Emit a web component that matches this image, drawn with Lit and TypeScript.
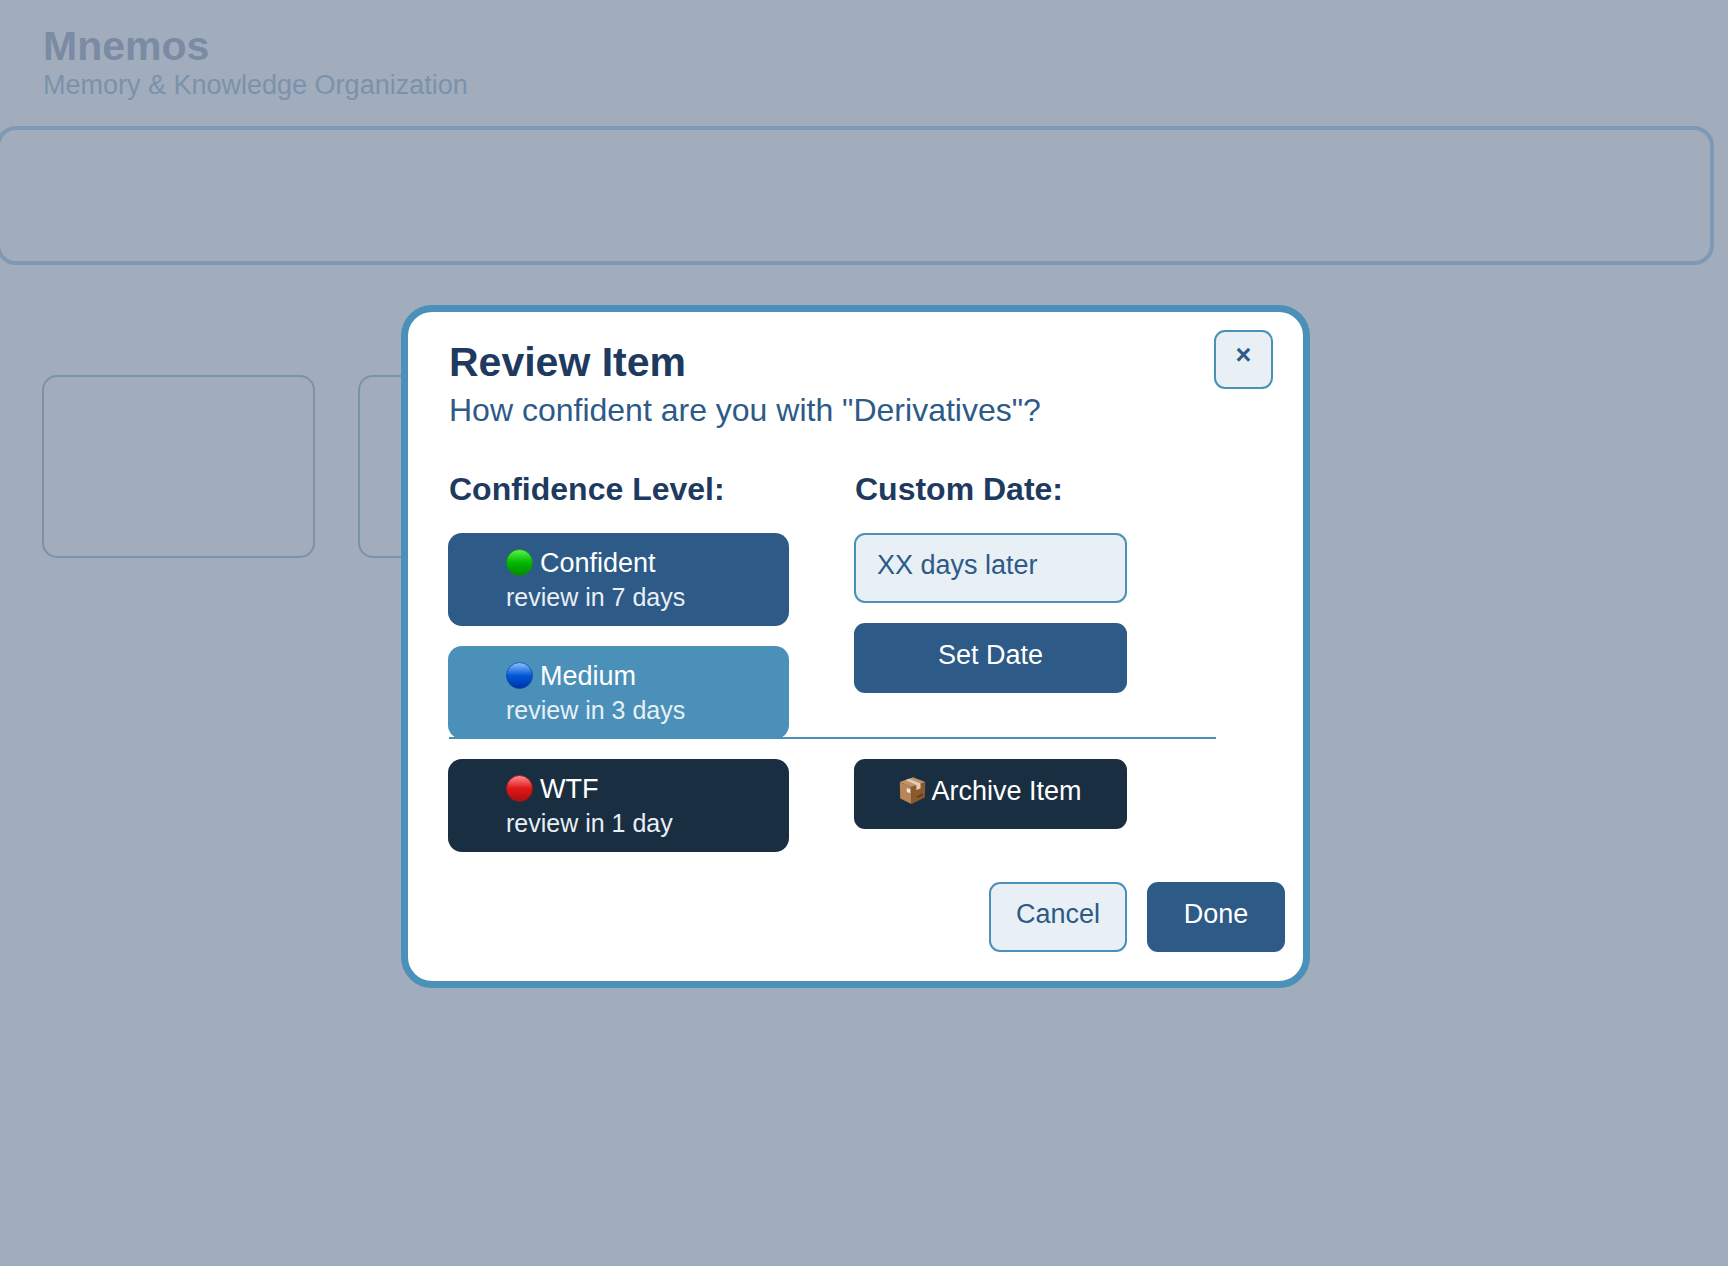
import { LitElement, html, css, svg } from "lit";
import { customElement, state } from "lit/decorators.js";

interface Level {
  id: string;
  label: string;
  note: string;
  tone: string;
  stops: [string, string, string];
  rim: string;
}

const LEVELS: Level[] = [
  { id: "high", label: "Confident", note: "review in 7 days", tone: "primary", stops: ["#5cf550", "#02b800", "#018a00"], rim: "#158a1c" },
  { id: "medium", label: "Medium", note: "review in 3 days", tone: "accent", stops: ["#8fc4ff", "#0059d6", "#0030a8"], rim: "#0b4a9e" },
  { id: "low", label: "WTF", note: "review in 1 day", tone: "dark", stops: ["#ff8f8f", "#e01717", "#a81010"], rim: "#8c1a1c" },
];

@customElement("app-root")
export class AppRoot extends LitElement {
  @state() private days = "";

  static styles = css`
    :host {
      --navy: #1e3a5f;
      --primary: #2d5a87;
      --accent: #4a90b9;
      --dark: #1a2e42;
      --tint: #e8eff5;
      --muted: #a1adbd;
      display: block;
      font-family: "Liberation Sans", Arial, sans-serif;
    }
    * { box-sizing: border-box; margin: 0; }
    h1, h2, h3 { font-weight: 700; }
    .page {
      position: relative;
      min-height: 100vh;
      overflow: hidden;
      background: var(--muted);
    }
    .header { padding: 23px 43px 0; }
    .brand { font-size: 41px; line-height: 46px; color: #7a8ba3; }
    .tagline { font-size: 27px; line-height: 32px; color: #7b92ab; }
    .banner {
      height: 139px;
      margin: 25px 14px 0 -4px;
      border: 4px solid #8099b2;
      border-radius: 20px;
    }
    .cards { display: flex; gap: 43px; padding: 110px 42px 0; }
    .card {
      width: 273px;
      height: 183px;
      border: 2px solid #7b92ab;
      border-radius: 15px;
    }
    .halo {
      position: absolute;
      right: -365px;
      bottom: -50px;
      width: 394px;
      height: 394px;
      border-radius: 50%;
      background: #a0abbb;
    }
    .overlay {
      position: absolute;
      inset: 0;
      display: flex;
      align-items: center;
      justify-content: center;
      padding: 27px 17px 0 0;
    }
    .dialog {
      width: 909px;
      padding: 18px 18px 29px 40px;
      border: 7px solid var(--accent);
      border-radius: 31px;
      background: #fff;
    }
    .top { display: flex; justify-content: space-between; padding-right: 12px; }
    .titles { padding: 9px 0 0 1px; }
    .title { font-size: 41px; line-height: 46px; color: var(--navy); }
    .question { font-size: 32px; line-height: 36px; padding-top: 7px; color: var(--primary); }
    .columns {
      display: grid;
      grid-template-columns: 341px 273px;
      grid-template-rows: 42px 93px 93px 93px;
      column-gap: 65px;
      row-gap: 20px;
      padding-top: 43px;
      position: relative;
    }
    .heading { padding-left: 1px; font-size: 32px; line-height: 36px; color: var(--navy); }
    .heading.first { grid-area: 1 / 1; }
    .heading.second { grid-area: 1 / 2; }
    .levels {
      grid-area: 2 / 1 / 5 / 2;
      display: flex;
      flex-direction: column;
      gap: 20px;
    }
    .custom {
      grid-area: 2 / 2 / 4 / 3;
      display: flex;
      flex-direction: column;
      gap: 20px;
    }
    .archive { grid-area: 4 / 2; }
    .rule {
      position: absolute;
      left: 1px;
      right: 69px;
      bottom: 113px;
      height: 2px;
      border: 0;
      background: var(--accent);
    }
    button, input { font: inherit; font-size: 27px; }
    button { cursor: pointer; }
    .level {
      display: flex;
      flex-direction: column;
      height: 93px;
      padding: 13px 58px 0;
      border: 0;
      border-radius: 14px;
      color: #fff;
      text-align: left;
    }
    .name { display: flex; align-items: center; gap: 7px; line-height: 35px; }
    .note { font-size: 25px; line-height: 32px; color: var(--tint); }
    .dot { width: 27px; height: 27px; margin-bottom: 3px; }
    .primary { background: var(--primary); }
    .accent { background: var(--accent); }
    .dark { background: var(--dark); }
    .action, .field {
      height: 70px;
      padding: 0 0 5px;
      border: 0;
      border-radius: 11px;
      color: #fff;
    }
    .action { display: flex; align-items: center; justify-content: center; gap: 5px; }
    .field, .outline {
      border: 2px solid var(--accent);
      background: var(--tint);
      color: var(--primary);
    }
    .field { width: 100%; padding-left: 21px; outline: none; }
    .field::placeholder { color: var(--primary); opacity: 1; }
    .footer { display: flex; justify-content: flex-end; gap: 20px; padding-top: 30px; }
    .footer .action { width: 138px; }
    .close {
      width: 59px;
      height: 59px;
      padding: 0 0 8px;
      border-radius: 11px;
      font-weight: 700;
    }
    .box { width: 27px; height: 27px; margin-bottom: 3px; }
  `;

  private dot(level: Level) {
    const id = `dot-${level.id}`;
    return html`<svg class="dot" viewBox="0 0 27 27" aria-hidden="true">
      ${svg`<defs>
        <linearGradient id=${id} x1="0" y1="0" x2="0" y2="1">
          <stop offset="0" stop-color=${level.stops[0]}></stop>
          <stop offset="0.5" stop-color=${level.stops[1]}></stop>
          <stop offset="1" stop-color=${level.stops[2]}></stop>
        </linearGradient>
      </defs>
      <circle cx="13.5" cy="13.5" r="13" fill="url(#${id})" stroke=${level.rim} stroke-width="0.8"></circle>`}
    </svg>`;
  }

  render() {
    return html`
      <div class="page">
        <header class="header">
          <h1 class="brand">Mnemos</h1>
          <p class="tagline">Memory &amp; Knowledge Organization</p>
        </header>
        <section class="banner"></section>
        <section class="cards">
          <div class="card"></div>
          <div class="card"></div>
        </section>
        <div class="halo"></div>
        <div class="overlay">
          <div class="dialog" role="dialog" aria-modal="true" aria-labelledby="title">
            <div class="top">
              <div class="titles">
                <h2 class="title" id="title">Review Item</h2>
                <p class="question">How confident are you with "Derivatives"?</p>
              </div>
              <button class="close outline">×</button>
            </div>
            <div class="columns">
              <h3 class="heading first">Confidence Level:</h3>
              <label class="heading second" for="days"><b>Custom Date:</b></label>
              <div class="levels">
                ${LEVELS.map(
                  (level) => html`<button class="level ${level.tone}">
                    <span class="name">${this.dot(level)}${level.label}</span>
                    <span class="note">${level.note}</span>
                  </button>`,
                )}
              </div>
              <div class="custom">
                <input
                  class="field"
                  id="days"
                  type="text"
                  placeholder="XX days later"
                  .value=${this.days}
                  @input=${(e: Event) => (this.days = (e.target as HTMLInputElement).value)}
                />
                <button class="action primary">Set Date</button>
              </div>
              <button class="action dark archive">
                <svg class="box" viewBox="0 0 27 27" aria-hidden="true">
                  <path d="M.8 5 12.5 9.5V27L1.2 21.5Z" fill="#b98555"></path>
                  <path d="M12.5 9.5 26.3 5 25.8 20.5 12.5 27Z" fill="#8a5a2e"></path>
                  <path d="M.8 5 14 .3 26.3 5 12.5 9.8Z" fill="#c4926a"></path>
                  <path d="M6.5 3 10 1.8 21.5 6.5V11.5L17.3 13V8.1Z" fill="#dfcbb8"></path>
                  <path d="M7.8 11 11.2 12.3V16.2L7.8 14.9Z" fill="#f0e8e0"></path>
                  <path d="M18 19.3 24 16.6V18.4L18 21.1Z" fill="#5f3b1c"></path>
                </svg>
                Archive Item
              </button>
              <hr class="rule" />
            </div>
            <div class="footer">
              <button class="action outline">Cancel</button>
              <button class="action primary">Done</button>
            </div>
          </div>
        </div>
      </div>
    `;
  }
}
